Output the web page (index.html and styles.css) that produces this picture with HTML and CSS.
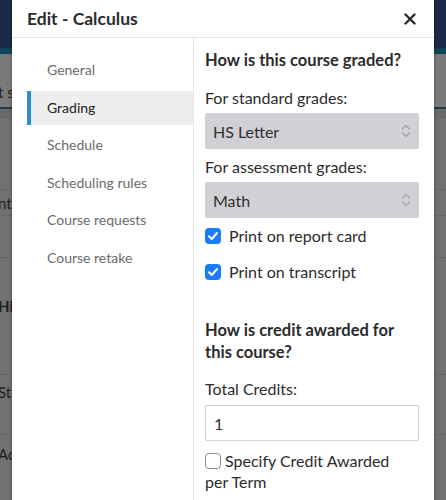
FILE: index.html
```html
<!DOCTYPE html>
<html>
<head>
<meta charset="utf-8">
<link rel="stylesheet" href="styles.css">
</head>
<body>
<div class="page">
  <div class="topbar"></div>
  <div class="tabline"></div>
  <div class="pg-row pg-tabs"><span class="frag">t s</span></div>
  <div class="pg-accent"></div>
  <div class="pg-band"></div>
  <div class="pg-row pg-r1"></div>
  <div class="pg-row pg-r2"><span class="frag">nt</span></div>
  <div class="pg-row pg-r3"></div>
  <div class="pg-row pg-r4"><span class="frag bold">Hig</span></div>
  <div class="pg-row pg-r5"><span class="frag">St</span></div>
  <div class="pg-row pg-r6"><span class="frag">Ac</span></div>
</div>

<div class="modal">
  <div class="modal-header">
    <h1 class="modal-title">Edit - Calculus</h1>
    <button class="close" aria-label="Close">
      <svg width="12" height="12" viewBox="0 0 12 12"><path d="M1.5 1.5 L10.5 10.5 M10.5 1.5 L1.5 10.5" stroke="#2b2b2b" stroke-width="2.4" stroke-linecap="round"/></svg>
    </button>
  </div>
  <div class="modal-body">
    <nav class="sidebar">
      <a class="nav-item">General</a>
      <a class="nav-item active">Grading</a>
      <a class="nav-item">Schedule</a>
      <a class="nav-item">Scheduling rules</a>
      <a class="nav-item">Course requests</a>
      <a class="nav-item">Course retake</a>
    </nav>
    <section class="content">
      <h2 class="heading h-first">How is this course graded?</h2>
      <div class="label l-first">For standard grades:</div>
      <div class="select">
        <span>HS Letter</span>
        <svg class="chev" width="10" height="18" viewBox="0 0 10 18"><path d="M1.5 7 L5 3.5 L8.5 7 M1.5 11 L5 14.5 L8.5 11" fill="none" stroke="#a3a3a6" stroke-width="1.3" stroke-linecap="round" stroke-linejoin="round"/></svg>
      </div>
      <div class="label l-second">For assessment grades:</div>
      <div class="select">
        <span>Math</span>
        <svg class="chev" width="10" height="18" viewBox="0 0 10 18"><path d="M1.5 7 L5 3.5 L8.5 7 M1.5 11 L5 14.5 L8.5 11" fill="none" stroke="#a3a3a6" stroke-width="1.3" stroke-linecap="round" stroke-linejoin="round"/></svg>
      </div>
      <label class="check-row cr-first">
        <span class="box checked"><svg width="16" height="16" viewBox="0 0 16 16"><path d="M4 8.3 L6.8 11 L12 5" fill="none" stroke="#fff" stroke-width="2" stroke-linecap="round" stroke-linejoin="round"/></svg></span>
        <span>Print on report card</span>
      </label>
      <label class="check-row cr-second">
        <span class="box checked"><svg width="16" height="16" viewBox="0 0 16 16"><path d="M4 8.3 L6.8 11 L12 5" fill="none" stroke="#fff" stroke-width="2" stroke-linecap="round" stroke-linejoin="round"/></svg></span>
        <span>Print on transcript</span>
      </label>
      <h2 class="heading h-second">How is credit awarded for this course?</h2>
      <div class="label l-third">Total Credits:</div>
      <div class="input">1</div>
      <p class="check-inline"><span class="box unchecked"></span>Specify Credit Awarded per Term</p>
    </section>
  </div>
</div>
</body>
</html>
```
FILE: styles.css
```css
* { box-sizing: border-box; }
html, body { margin: 0; padding: 0; }
body {
  width: 446px;
  height: 500px;
  overflow: hidden;
  position: relative;
  background: #757575;
  font-family: Lato, "Noto Sans", sans-serif;
  color: #2b2b2b;
}

/* underlying dimmed page */
.page { display: flex; flex-direction: column; height: 500px; background: #727272; }
.topbar { height: 48px; background: #1b2a47; flex: none; }
.tabline { height: 6px; background: #0f4656; flex: none; }
.pg-row { display: flex; align-items: center; font-size: 15px; color: #1e1e1e; flex: none; }
.pg-tabs { height: 53px; background: #7a7a7a; align-items: flex-end; padding-bottom: 6px; }
.pg-accent { height: 2px; background: #1a3c55; flex: none; }
.pg-band { height: 10px; background: #6a6a6a; flex: none; }
.pg-r1 { height: 71px; border-bottom: 1px solid #666; }
.pg-r2 { height: 26px; border-bottom: 1px solid #666; }
.pg-r3 { height: 42px; border-bottom: 1px solid #666; }
.pg-r4 { height: 117px; border-bottom: 1px solid #666; align-items: flex-start; padding-top: 39px; }
.pg-r5 { height: 60px; border-bottom: 1px solid #666; align-items: flex-start; padding-top: 8px; }
.pg-r6 { height: 60px; align-items: flex-start; padding-top: 10px; }
.frag { margin-left: -2px; }
.frag.bold { font-weight: 700; }

/* modal */
.modal {
  position: absolute;
  left: 12px;
  top: 0;
  width: 422px;
  height: 520px;
  background: #fff;
  box-shadow: 0 0 4px rgba(0,0,0,0.35);
  display: flex;
  flex-direction: column;
}
.modal-header {
  height: 38px;
  flex: none;
  display: flex;
  align-items: center;
  justify-content: space-between;
  padding: 0 18px 0 15px;
  border-bottom: 1px solid #e6e6e6;
}
.modal-title { margin: 0; font-size: 17.5px; font-weight: 700; line-height: 22px; color: #2b2b2b; }
.close { border: 0; background: none; padding: 0; width: 12px; height: 12px; display: flex; }

.modal-body { flex: 1; display: grid; grid-template-columns: 182px 1fr; }
.sidebar {
  border-right: 1px solid #e6e6e6;
  padding: 15px 0 0 15px;
  display: flex;
  flex-direction: column;
  gap: 3.5px;
}
.nav-item {
  display: block;
  height: 34px;
  line-height: 34px;
  padding-left: 16px;
  font-size: 14px;
  color: #6b6b6b;
  border-left: 4px solid transparent;
}
.nav-item.active { background: #eeeeee; color: #222; border-left-color: #2b8fd6; }

.content { padding: 11px 15px 0 11px; font-size: 16px; }
.heading { margin: 0; font-size: 16.5px; font-weight: 700; line-height: 22px; color: #2b2b2b; }
.h-second { margin-top: 36px; }
.label { line-height: 22px; color: #2b2b2b; }
.l-first { margin-top: 16px; margin-bottom: 4px; }
.l-second { margin-top: 7px; margin-bottom: 4px; }
.l-third { margin-top: 15px; margin-bottom: 5px; }
.select {
  height: 36px;
  background: #d1d1d5;
  border-radius: 2px;
  display: flex;
  align-items: center;
  justify-content: space-between;
  padding: 0 8px;
  color: #2f2f2f;
}
.chev { display: block; }
.check-row { display: flex; align-items: center; gap: 8px; line-height: 22px; }
.cr-first { margin-top: 7px; }
.cr-second { margin-top: 14px; }
.box {
  width: 16px;
  height: 16px;
  border-radius: 4px;
  flex: none;
  display: inline-flex;
}
.box.checked { background: #1a7cf7; }
.box.unchecked {
  border: 1.5px solid #8a8a8a;
  background: #fff;
  vertical-align: -2px;
  margin-right: 4px;
}
.input {
  height: 36px;
  border: 1px solid #d4d4d4;
  border-radius: 2px;
  padding: 0 8px;
  display: flex;
  align-items: center;
  color: #2f2f2f;
}
.check-inline { margin: 9px 0 0 0; padding-right: 3px; line-height: 21px; }
```
